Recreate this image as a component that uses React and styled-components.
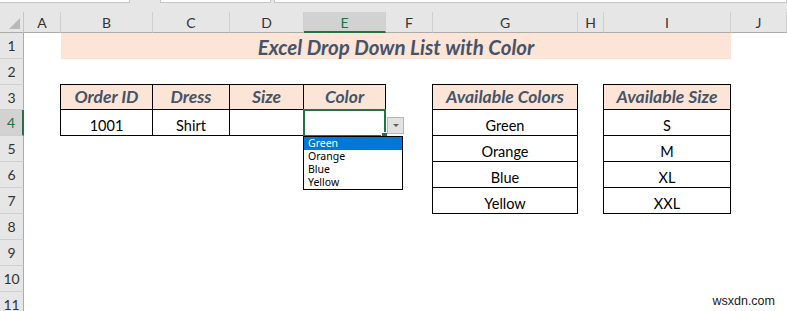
import React from "react";
import styled, { createGlobalStyle } from "styled-components";

const GlobalStyle = createGlobalStyle`
  html, body {
    margin: 0;
    padding: 0;
    background: #ffffff;
  }
  body {
    width: 787px;
    height: 311px;
    overflow: hidden;
    font-family: "Lato", "Open Sans", sans-serif;
  }
`;

const Window = styled.div`
  position: relative;
  width: 787px;
  height: 311px;
  overflow: hidden;
  background: #ffffff;
`;

const FormulaStrip = styled.div`
  display: flex;
  height: 12px;
  background: #e6e6e6;
`;

const StripBox = styled.div`
  width: ${(p) => p.$w}px;
  flex: ${(p) => (p.$grow ? 1 : "none")};
  margin-left: ${(p) => p.$ml || 0}px;
  height: 2px;
  background: #ffffff;
  border-bottom: 1px solid #c6c6c6;
  border-right: 1px solid #c6c6c6;
  border-left: ${(p) => (p.$ml ? "1px solid #c6c6c6" : "none")};
`;

const Sheet = styled.div`
  display: grid;
  grid-template-columns: 24px 37px 92px 77px 74px 82px 47px 145px 26px 127px 56px;
  grid-template-rows: 21px 26px 26px 25px 26px 26px 26px 26px 26px 26px 26px 26px;
`;

const Corner = styled.div`
  grid-column: 1;
  grid-row: 1;
  position: relative;
  background: #e6e6e6;
  border-right: 1px solid #c6c6c6;
  border-bottom: 1px solid #ababab;

  &::after {
    content: "";
    position: absolute;
    right: 3px;
    bottom: 3px;
    width: 0;
    height: 0;
    border-left: 11px solid transparent;
    border-bottom: 11px solid #b9b9b9;
  }
`;

const ColHeader = styled.div`
  grid-row: 1;
  grid-column: ${(p) => p.$col};
  display: flex;
  align-items: center;
  justify-content: center;
  background: ${(p) => (p.$active ? "#d2d2d2" : "#e6e6e6")};
  color: ${(p) => (p.$active ? "#217346" : "#333333")};
  border-right: 1px solid #d0d0d0;
  border-bottom: ${(p) => (p.$active ? "2px solid #217346" : "1px solid #ababab")};
  font-size: 14px;
  padding-top: 1px;
`;

const RowHeader = styled.div`
  grid-column: 1;
  grid-row: ${(p) => p.$row};
  display: flex;
  align-items: center;
  justify-content: center;
  background: ${(p) => (p.$active ? "#d2d2d2" : "#e6e6e6")};
  color: ${(p) => (p.$active ? "#217346" : "#333333")};
  border-right: ${(p) => (p.$active ? "2px solid #217346" : "1px solid #ababab")};
  border-bottom: 1px solid #d0d0d0;
  font-size: 14px;
`;

const TitleBand = styled.div`
  grid-column: 3 / 11;
  grid-row: 2;
  display: flex;
  align-items: center;
  justify-content: center;
  background: #fce4d6;
  color: #44546a;
  font-size: 20.5px;
  font-weight: 700;
  font-style: italic;
  padding-top: 1px;
`;

const Table = styled.div`
  grid-column: ${(p) => p.$cols};
  grid-row: ${(p) => p.$rows};
  display: grid;
  grid-template-columns: subgrid;
  grid-template-rows: subgrid;
  margin: -1px 0 0 -1px;
`;

const Cell = styled.div`
  position: relative;
  display: flex;
  align-items: flex-end;
  justify-content: center;
  padding-bottom: ${(p) => (p.$head ? 2 : 1)}px;
  background: ${(p) => (p.$head ? "#fce4d6" : "#ffffff")};
  color: ${(p) => (p.$head ? "#44546a" : "#000000")};
  font-size: ${(p) => (p.$head ? 17.5 : 14.5)}px;
  font-weight: ${(p) => (p.$head ? 700 : 400)};
  font-style: ${(p) => (p.$head ? "italic" : "normal")};
  border-right: 1px solid #000000;
  border-bottom: 1px solid #000000;
  border-left: ${(p) => (p.$first ? "1px solid #000000" : "none")};
  border-top: ${(p) => (p.$top ? "1px solid #000000" : "none")};
  white-space: nowrap;
`;

const SelectionFrame = styled.div`
  position: absolute;
  left: -1px;
  top: -1px;
  right: -1px;
  bottom: -2px;
  border: 2px solid #217346;
  pointer-events: none;
  z-index: 2;

  &::after {
    content: "";
    position: absolute;
    right: -4px;
    bottom: -4px;
    width: 5px;
    height: 5px;
    background: #217346;
    border: 1px solid #ffffff;
  }
`;

const DropArrow = styled.div`
  position: absolute;
  left: calc(100% + 2px);
  top: 7px;
  width: 15px;
  height: 15px;
  display: flex;
  align-items: center;
  justify-content: center;
  background: #e1e1e1;
  border: 1px solid #b7b7b7;
  z-index: 3;

  &::before {
    content: "";
    width: 0;
    height: 0;
    border-left: 3px solid transparent;
    border-right: 3px solid transparent;
    border-top: 3px solid #606060;
  }
`;

const DropList = styled.ul`
  position: absolute;
  left: -1px;
  top: calc(100% + 1px);
  width: 98px;
  margin: 0;
  padding: 0;
  list-style: none;
  background: #ffffff;
  border: 1px solid #000000;
  z-index: 4;
`;

const DropItem = styled.li`
  height: 13px;
  line-height: 13px;
  padding-left: 4px;
  font-family: "Noto Sans", "DejaVu Sans", sans-serif;
  font-size: 10.5px;
  text-align: left;
  overflow: hidden;
  color: ${(p) => (p.$selected ? "#ffffff" : "#000000")};
  background: ${(p) => (p.$selected ? "#0078d7" : "transparent")};
`;

const Watermark = styled.div`
  position: absolute;
  right: 12px;
  bottom: 3px;
  font-family: "Liberation Sans", Arial, sans-serif;
  font-size: 12.5px;
  color: #1a1a1a;
`;

const columns = ["A", "B", "C", "D", "E", "F", "G", "H", "I", "J"];
const colors = ["Green", "Orange", "Blue", "Yellow"];
const sizes = ["S", "M", "XL", "XXL"];

function ListTable({ cols, title, items }) {
  return (
    <Table $cols={cols} $rows="4 / 9">
      <Cell $head $first $top>
        {title}
      </Cell>
      {items.map((item) => (
        <Cell key={item} $first>
          {item}
        </Cell>
      ))}
    </Table>
  );
}

export default function App() {
  return (
    <Window>
      <GlobalStyle />
      <FormulaStrip>
        <StripBox $w={129} />
        <StripBox $w={109} $ml={30} />
        <StripBox $grow $ml={3} />
      </FormulaStrip>
      <Sheet>
        <Corner />
        {columns.map((c, i) => (
          <ColHeader key={c} $col={i + 2} $active={c === "E"}>
            {c}
          </ColHeader>
        ))}
        {Array.from({ length: 11 }, (_, i) => (
          <RowHeader key={i} $row={i + 2} $active={i === 3}>
            {i + 1}
          </RowHeader>
        ))}

        <TitleBand>Excel Drop Down List with Color</TitleBand>

        <Table $cols="3 / 7" $rows="4 / 6">
          <Cell $head $first $top>
            Order ID
          </Cell>
          <Cell $head $top>
            Dress
          </Cell>
          <Cell $head $top>
            Size
          </Cell>
          <Cell $head $top>
            Color
          </Cell>
          <Cell $first>1001</Cell>
          <Cell>Shirt</Cell>
          <Cell />
          <Cell>
            <SelectionFrame />
            <DropArrow />
            <DropList>
              {colors.map((c, i) => (
                <DropItem key={c} $selected={i === 0}>
                  {c}
                </DropItem>
              ))}
            </DropList>
          </Cell>
        </Table>

        <ListTable cols="8 / 9" title="Available Colors" items={colors} />
        <ListTable cols="10 / 11" title="Available Size" items={sizes} />
      </Sheet>
      <Watermark>wsxdn.com</Watermark>
    </Window>
  );
}
